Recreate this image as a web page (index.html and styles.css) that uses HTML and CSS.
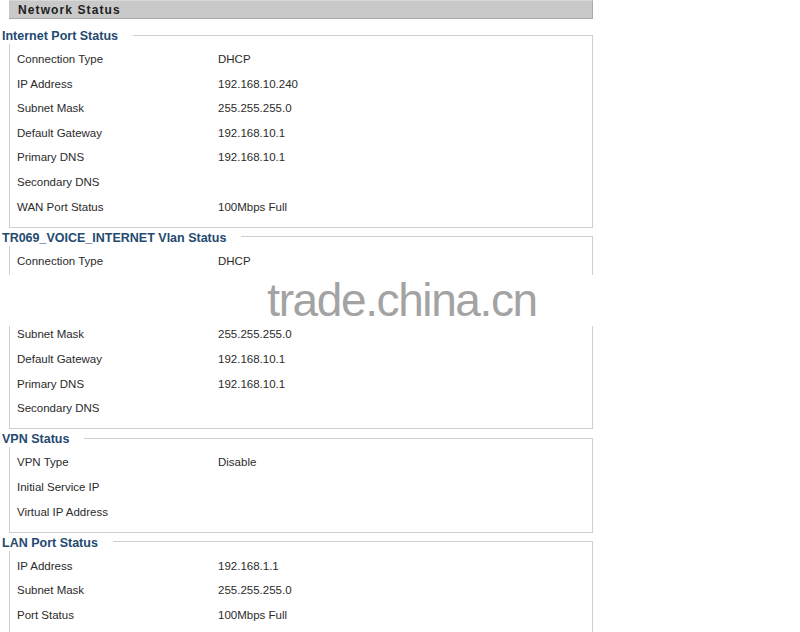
FILE: index.html
```html
<!DOCTYPE html>
<html>
<head>
<meta charset="utf-8">
<title>Network Status</title>
<link rel="stylesheet" href="styles.css">
</head>
<body>
<div class="page">
  <div class="titlebar">Network Status</div>

  <fieldset class="group">
    <legend>Internet Port Status</legend>
    <div class="rows">
      <div class="row"><span>Connection Type</span><span>DHCP</span></div>
      <div class="row"><span>IP Address</span><span>192.168.10.240</span></div>
      <div class="row"><span>Subnet Mask</span><span>255.255.255.0</span></div>
      <div class="row"><span>Default Gateway</span><span>192.168.10.1</span></div>
      <div class="row"><span>Primary DNS</span><span>192.168.10.1</span></div>
      <div class="row"><span>Secondary DNS</span><span></span></div>
      <div class="row"><span>WAN Port Status</span><span>100Mbps Full</span></div>
    </div>
  </fieldset>

  <fieldset class="group">
    <legend>TR069_VOICE_INTERNET Vlan Status</legend>
    <div class="rows">
      <div class="row"><span>Connection Type</span><span>DHCP</span></div>
      <div class="row"><span></span><span></span></div>
      <div class="row"><span></span><span></span></div>
      <div class="row"><span>Subnet Mask</span><span>255.255.255.0</span></div>
      <div class="row"><span>Default Gateway</span><span>192.168.10.1</span></div>
      <div class="row"><span>Primary DNS</span><span>192.168.10.1</span></div>
      <div class="row"><span>Secondary DNS</span><span></span></div>
    </div>
  </fieldset>

  <fieldset class="group">
    <legend>VPN Status</legend>
    <div class="rows">
      <div class="row"><span>VPN Type</span><span>Disable</span></div>
      <div class="row"><span>Initial Service IP</span><span></span></div>
      <div class="row"><span>Virtual IP Address</span><span></span></div>
    </div>
  </fieldset>

  <fieldset class="group">
    <legend>LAN Port Status</legend>
    <div class="rows">
      <div class="row"><span>IP Address</span><span>192.168.1.1</span></div>
      <div class="row"><span>Subnet Mask</span><span>255.255.255.0</span></div>
      <div class="row"><span>Port Status</span><span>100Mbps Full</span></div>
    </div>
  </fieldset>
</div>
<div class="watermark"><span class="wm-text">trade.china.cn</span></div>
</body>
</html>
```

FILE: styles.css
```css
html, body {
  margin: 0;
  padding: 0;
  background: #ffffff;
}

body {
  position: relative;
  width: 800px;
  height: 632px;
  overflow: hidden;
  font-family: "Liberation Sans", Arial, sans-serif;
}

.page {
  padding-left: 9px;
  width: 584px;
}

.titlebar {
  height: 19px;
  box-sizing: border-box;
  background: #c9c9c9;
  border-top: 1px solid #d8d8d8;
  border-bottom: 1px solid #a9a9a9;
  border-right: 1px solid #a9a9a9;
  padding-left: 9px;
  font-size: 12px;
  line-height: 18px;
  font-weight: bold;
  letter-spacing: 1.1px;
  color: #1e1e1e;
  margin-bottom: 7px;
}

.group {
  margin: 0;
  padding: 0 0 7.5px 0;
  border: 1px solid #cfcfcf;
  min-width: 0;
  box-sizing: border-box;
  width: 584px;
}

.group legend {
  margin-left: -8px;
  padding: 3px 15px 0 0;
  font-size: 12.5px;
  line-height: 15px;
  font-weight: bold;
  color: #254a70;
  background: #ffffff;
}

.rows {
  padding-top: 3px;
}

.row {
  display: grid;
  grid-template-columns: 201px 1fr;
  height: 24.6px;
  line-height: 24.6px;
  padding-left: 7px;
  font-size: 11.5px;
  color: #2b2b2b;
}

.watermark {
  position: absolute;
  left: 0;
  top: 275px;
  width: 800px;
  height: 51px;
  background: #ffffff;
  display: flex;
  justify-content: center;
}

.wm-text {
  margin-left: 4px;
  font-family: "Liberation Sans", Arial, sans-serif;
  font-size: 46px;
  line-height: 51px;
  letter-spacing: -1.4px;
  color: #a3a3a3;
}
```
